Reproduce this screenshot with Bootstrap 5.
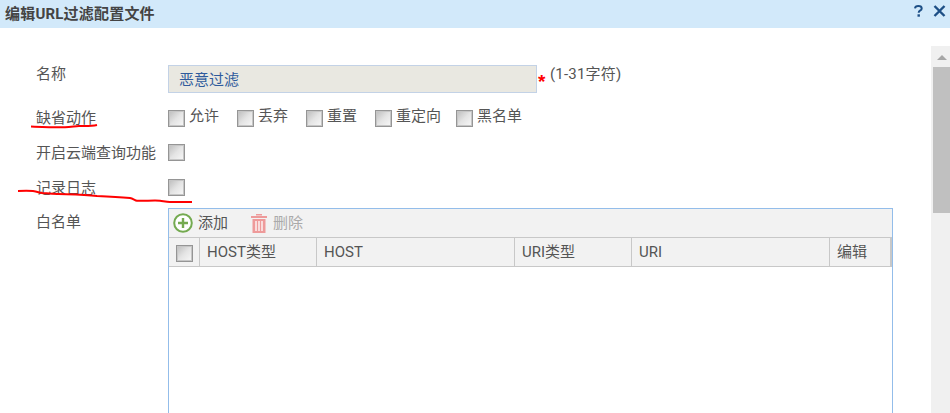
<!DOCTYPE html>
<html lang="zh">
<head>
<meta charset="utf-8">
<title>编辑URL过滤配置文件</title>
<link href="https://cdn.jsdelivr.net/npm/bootstrap@5.3.0/dist/css/bootstrap.min.css" rel="stylesheet">
<style>
html,body{height:413px;overflow:hidden;background:#fff}
body{position:relative;font-family:Roboto,"Noto Sans CJK SC",sans-serif;font-size:15px;line-height:20px;color:#555}
.dlg-head{height:28px;background:#d2e9fa;padding:0 4px 0 5px}
.dlg-title{font-size:15px;font-weight:700;color:#444;line-height:29px;letter-spacing:.2px}
.dlg-tools{gap:10px;margin-top:-6px}
.dlg-body{height:385px;overflow:hidden}
.form-pane{padding:36px 0 0 36px}
.frow{display:flex}
.flabel{width:132px;flex:none;white-space:nowrap}
.name-row{height:42px;align-items:flex-start}
.name-box{width:369px;height:28px;margin-top:1px;background:#e9e8e1;border:1px solid #c3d2e6;color:#2f5b9c;padding:3px 10px;line-height:22px}
.req{color:#f00;margin:8px 0 0 1px;width:12px;font:700 19px/20px "Liberation Sans",sans-serif}
.hint-text{letter-spacing:.2px}
.act-row{height:35px}
.act-row .flabel{padding-top:2px}
.chk-set{gap:18px}
.chk-item{display:flex;gap:4px;align-items:flex-start}
.chk-tight{margin-right:-3px}
.fake-chk{width:17px;height:17px;flex:none;border:1px solid #959595;background:linear-gradient(135deg,#bcbcbc 0,#e4e4e4 50%,#f8f8f8 100%);box-shadow:inset 0 0 0 1px #c6c6c6;margin-top:4px}
.cloud-row{height:34px;padding-top:2px}
.cloud-row .fake-chk{margin-top:1px}
.log-row{height:33px;padding-top:3px}
.log-row .fake-chk{margin-top:1px}
.white-row .flabel{padding-top:4px}
.grid-panel{width:725px;height:205px;border:1px solid #93bdea;border-bottom:0;flex:none}
.grid-tools{height:28px;background:#f2f2f2;gap:22px;padding-left:4px}
.tool-item{display:flex;align-items:center;gap:5px}
.tool-off{color:#aaa}
.grid-heads{display:flex;height:30px;background:#f2f2f2;border-top:1px solid #c8c8c8;border-bottom:1px solid #c8c8c8}
.gh{border-right:1px solid #c8c8c8;padding:4px 0 0 7px;flex:none;white-space:nowrap}
.gh-check{width:31px;padding:0 0 0 7px}
.gh-check .fake-chk{margin-top:7px}
.w1{width:117px}.w2{width:198px}.w3{width:117px}.w4{width:198px}.w5{width:62px;border-right-width:2px}
.sbar{position:absolute;left:931px;top:46px;width:19px;height:367px;background:#f0f0f0}
.sthumb{position:absolute;left:2px;top:21px;width:17px;height:146px;background:#c0c0c0}
.sarrow{position:absolute;left:6px;top:9px;width:0;height:0;border-left:5px solid transparent;border-right:5px solid transparent;border-bottom:5px solid #a6a6a6}
.scribble{position:absolute;left:0;top:0;pointer-events:none}
</style>
</head>
<body>
<header class="dlg-head d-flex justify-content-between align-items-center">
  <div class="dlg-title">编辑URL过滤配置文件</div>
  <div class="dlg-tools d-flex align-items-center">
    <svg width="9" height="12" viewBox="0 0 9 12" aria-label="帮助"><path d="M1 3.300C1.200 1.800 2.600 1 4.300 1c1.800 0 3.400.9 3.400 2.400 0 1.200-.9 1.800-1.700 2.300-.8.5-1.300 1-1.300 2" fill="none" stroke="#1d4f86" stroke-width="2"/><rect x="3.500" y="9.300" width="2.400" height="2.400" fill="#1d4f86"/></svg>
    <svg width="13" height="12" viewBox="0 0 13 12" aria-label="关闭"><path d="M1.500 1l10 10M11.500 1l-10 10" fill="none" stroke="#1d4f86" stroke-width="2.400"/></svg>
  </div>
</header>
<main class="dlg-body">
  <form class="form-pane">
    <div class="frow name-row">
      <div class="flabel">名称</div>
      <div class="name-box">恶意过滤</div>
      <span class="req">*</span>
      <span class="hint-text">(1-31字符)</span>
    </div>
    <div class="frow act-row">
      <div class="flabel">缺省动作</div>
      <div class="d-flex chk-set">
        <div class="chk-item"><span class="fake-chk"></span>允许</div>
        <div class="chk-item"><span class="fake-chk"></span>丢弃</div>
        <div class="chk-item"><span class="fake-chk"></span>重置</div>
        <div class="chk-item chk-tight"><span class="fake-chk"></span>重定向</div>
        <div class="chk-item"><span class="fake-chk"></span>黑名单</div>
      </div>
    </div>
    <div class="frow cloud-row">
      <div class="flabel">开启云端查询功能</div>
      <span class="fake-chk"></span>
    </div>
    <div class="frow log-row">
      <div class="flabel">记录日志</div>
      <span class="fake-chk"></span>
    </div>
    <div class="frow white-row">
      <div class="flabel">白名单</div>
      <div class="grid-panel">
        <div class="grid-tools d-flex align-items-center">
          <div class="tool-item">
            <svg width="20" height="20" viewBox="0 0 20 20" aria-label="添加"><circle cx="10" cy="10" r="8.800" fill="#fff" stroke="#74aa50" stroke-width="2"/><path d="M10 5v10M5 10h10" stroke="#74aa50" stroke-width="2.400"/></svg>
            <span>添加</span>
          </div>
          <div class="tool-item tool-off">
            <svg width="18" height="20" viewBox="0 0 18 20" aria-label="删除"><path d="M6 2.500V1h6v1.500M1 3h16v2H1z" fill="#ee9a9a"/><path d="M2.500 6h13v14h-13z" fill="#ee9a9a"/><path d="M6 8v10M9 8v10M12 8v10" stroke="#fff" stroke-width="1.300"/></svg>
            <span>删除</span>
          </div>
        </div>
        <div class="grid-heads">
          <div class="gh gh-check"><span class="fake-chk d-block"></span></div>
          <div class="gh w1">HOST类型</div>
          <div class="gh w2">HOST</div>
          <div class="gh w3">URI类型</div>
          <div class="gh w4">URI</div>
          <div class="gh w5">编辑</div>
        </div>
      </div>
    </div>
  </form>
</main>
<aside class="sbar"><span class="sarrow"></span><span class="sthumb"></span></aside>
<svg class="scribble" width="950" height="413" aria-hidden="true">
  <path d="M31 126.500c12 .5 22 1 34 .8 6 0 10-1.300 14-1.300 6 0 12 .4 18-1" fill="none" stroke="#f00" stroke-width="2"/>
  <path d="M18 191c6-.3 11-.3 15 0 4 .5 6 1.500 9 2 18 1.500 36 1 55 3 12 .5 22 1 33 2 3 .5 5 2.500 7 2.700 7 .3 15-.3 23 0 3 .3 6 1.300 10 1.300 6 0 14 .2 22 0" fill="none" stroke="#f00" stroke-width="2"/>
</svg>
</body>
</html>
